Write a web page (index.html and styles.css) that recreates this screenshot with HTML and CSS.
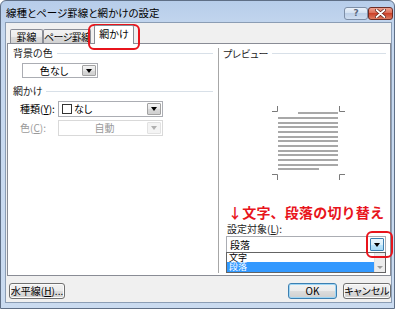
FILE: index.html
```html
<!DOCTYPE html>
<html lang="ja">

<head>
    <meta charset="UTF-8">
    <meta name="viewport" content="width=device-width, initial-scale=1.0">
    <title>線種とページ罫線と網かけの設定</title>
    <link rel="stylesheet" href="styles.css">
</head>

<body>
    <div class="window">
        <div class="titlebar">
            <span class="title">線種とページ罫線と網かけの設定</span>
            <div class="caption-buttons">
                <button class="cap help">?</button>
                <button class="cap close">
                    <svg width="11" height="9" viewBox="0 0 11 9">
                        <path d="M1.5 1 L9.5 8 M9.5 1 L1.5 8" stroke="#5a1c14" stroke-width="3.2" stroke-linecap="round" />
                        <path d="M1.5 1 L9.5 8 M9.5 1 L1.5 8" stroke="#fff" stroke-width="1.8" stroke-linecap="round" />
                    </svg>
                </button>
            </div>
        </div>

        <div class="client">
            <div class="tabs">
                <div class="tab tab-border">罫線</div>
                <div class="tab tab-page">ページ罫線</div>
                <div class="tab active">網かけ</div>
            </div>

            <div class="panel">
                <!-- left: shading options -->
                <div class="col-left">
                    <div class="group-title">背景の色</div>
                    <div class="combo combo-fill">
                        <span class="combo-text center">色なし</span>
                        <span class="combo-btn"></span>
                    </div>

                    <div class="group-title gap">網かけ</div>
                    <div class="field">
                        <span class="field-label">種類(<u>Y</u>):</span>
                        <div class="combo wide">
                            <span class="swatch"></span>
                            <span class="combo-text">なし</span>
                            <span class="combo-btn"></span>
                        </div>
                    </div>
                    <div class="field disabled">
                        <span class="field-label">色(<u>C</u>):</span>
                        <div class="combo wide">
                            <span class="combo-text center">自動</span>
                            <span class="combo-btn"></span>
                        </div>
                    </div>
                </div>

                <!-- right: preview -->
                <div class="col-right">
                    <div class="group-title">プレビュー</div>
                    <svg class="preview" width="171" height="84" viewBox="0 0 171 84">
                        <g fill="none" stroke="#7a7a7a" stroke-width="1">
                            <path d="M53 11.5 H58.5 V6" />
                            <path d="M120.5 6 V11.5 H126" />
                            <path d="M53 74.5 H58.5 V80" />
                            <path d="M126 74.5 H120.5 V80" />
                        </g>
                        <g fill="#a8a8a8">
                            <rect x="79" y="12" width="40" height="2" />
                            <rect x="59" y="17" width="60" height="2" />
                            <rect x="59" y="22" width="60" height="2" />
                            <rect x="59" y="26" width="60" height="2" />
                            <rect x="59" y="31" width="60" height="2" />
                            <rect x="59" y="36" width="60" height="2" />
                            <rect x="59" y="40" width="60" height="2" />
                            <rect x="59" y="45" width="60" height="2" />
                            <rect x="59" y="50" width="60" height="2" />
                            <rect x="59" y="54" width="60" height="2" />
                            <rect x="59" y="59" width="60" height="2" />
                            <rect x="59" y="64" width="60" height="2" />
                            <rect x="59" y="68" width="41" height="2" />
                        </g>
                    </svg>

                    <div class="note">↓文字、段落の切り替え</div>
                    <div class="apply-label">設定対象(<u>L</u>):</div>
                    <div class="combo apply">
                        <span class="combo-text">段落</span>
                        <span class="combo-btn hot"></span>
                    </div>
                    <div class="droplist">
                        <div class="items">
                            <div class="item">文字</div>
                            <div class="item selected">段落</div>
                        </div>
                        <div class="scroll"><span class="scroll-arrow"></span></div>
                    </div>
                </div>
            </div>

            <div class="footer">
                <button class="btn btn-hline">水平線(<u>H</u>)...</button>
                <div class="footer-right">
                    <button class="btn btn-ok">OK</button>
                    <button class="btn btn-cancel">キャンセル</button>
                </div>
            </div>
        </div>

        <!-- red annotation marks -->
        <div class="mark mark-tab"></div>
        <div class="mark mark-combo"></div>
    </div>
</body>

</html>
```

FILE: styles.css
```css
* {
    margin: 0;
    padding: 0;
    box-sizing: border-box;
}

body {
    width: 400px;
    height: 309px;
    overflow: hidden;
    background: #fff;
    font-family: "Noto Sans CJK JP", "Noto Sans", sans-serif;
    font-size: 10px;
    color: #000;
    font-feature-settings: "palt";
}

u {
    text-decoration: underline;
    text-underline-offset: 1px;
}

/* window frame */
.window {
    position: relative;
    width: 395px;
    height: 309px;
    border: 1px solid #5f6f86;
    border-radius: 6px 6px 0 0;
    background: linear-gradient(#b7cdea, #c6d8ef 30px, #cadbf0);
    padding: 0 2px 5px 4px;
    display: flex;
    flex-direction: column;
}

.titlebar {
    height: 21px;
    display: flex;
    justify-content: space-between;
    align-items: flex-start;
    padding: 5px 1px 0 1px;
    margin-right: -2px;
}

.title {
    font-size: 10.5px;
    line-height: 14px;
    color: #000;
}

.caption-buttons {
    display: flex;
    margin-top: 1px;
}

.cap {
    height: 13px;
    border-radius: 3px;
    display: flex;
    align-items: center;
    justify-content: center;
    font-family: "DejaVu Sans", sans-serif;
}

.help {
    width: 24px;
    border: 1px solid #7d8ea6;
    background: linear-gradient(#eaf1fa, #d4e2f2 45%, #bccfe7 50%, #cfdef1);
    color: #5b6a80;
    font-size: 9px;
    font-weight: bold;
    line-height: 11px;
}

.close {
    width: 25px;
    border: 1px solid #6d2c25;
    background: linear-gradient(#eea392, #dc6b55 45%, #cc4129 50%, #de7c62);
}

/* client area */
.client {
    flex: 1;
    background: #f0f0f0;
    border: 1px solid #8b9db4;
    padding: 2px 0 0 1px;
    display: flex;
    flex-direction: column;
}

.tabs {
    height: 19px;
    margin-bottom: -1px;
    padding-left: 3px;
    display: flex;
    align-items: flex-end;
}

.tab {
    height: 15px;
    border: 1px solid #898c95;
    border-bottom: none;
    border-radius: 2px 2px 0 0;
    background: linear-gradient(#f3f3f3, #ebebeb 50%, #dddddd 50%, #cfcfcf);
    text-align: center;
    line-height: 13px;
    white-space: nowrap;
    overflow: hidden;
}

.tab-border {
    width: 33px;
}

.tab-page {
    width: 48px;
    letter-spacing: -0.6px;
}

.tab.active {
    position: relative;
    z-index: 2;
    width: 40px;
    height: 19px;
    margin-left: 3px;
    background: #fff;
    line-height: 16px;
}

.panel {
    height: 233px;
    border: 1px solid #898c95;
    background: #fff;
    display: flex;
}

.col-left {
    width: 210px;
    padding-top: 3px;
}

.col-right {
    flex: 1;
    margin: 4px 0 2px;
    border-left: 1px solid #a7a7a7;
    display: flex;
    flex-direction: column;
}

.group-title {
    display: flex;
    align-items: center;
    height: 12px;
    line-height: 12px;
    padding: 0 5px;
    color: #1e1e1e;
}

.group-title::after {
    content: "";
    flex: 1;
    border-top: 1px solid #d8e0e8;
    margin-left: 4px;
}

.group-title.gap {
    margin-top: 7px;
}

.col-right .group-title {
    height: 11px;
    padding: 0 4px;
}

/* combo boxes */
.combo {
    display: flex;
    align-items: center;
    height: 16px;
    border: 1px solid #abadb3;
    background: #fff;
    padding: 1px;
}

.combo-fill {
    width: 76px;
    height: 15px;
    margin: 4px 0 0 14px;
}

.combo-text {
    flex: 1;
    line-height: 12px;
    padding-left: 2px;
}

.combo-text.center {
    text-align: center;
}

.combo-btn {
    position: relative;
    width: 14px;
    height: 100%;
    border: 1px solid #a2a2a2;
    border-radius: 1px;
    background: linear-gradient(#f4f4f4, #e6e6e6 50%, #d9d9d9 50%, #d0d0d0);
}

.combo-btn::after {
    content: "";
    position: absolute;
    left: 50%;
    top: 50%;
    margin: -2px 0 0 -3px;
    border-left: 3px solid transparent;
    border-right: 3px solid transparent;
    border-top: 4px solid #000;
}

.combo-btn.hot {
    border-color: #3c7fb1;
    background: linear-gradient(#eaf6fd, #d9f0fc 50%, #bee6fd 50%, #a7d9f5);
}

.field {
    display: flex;
    align-items: center;
    padding-left: 12px;
    margin-top: 4px;
}

.field + .field {
    margin-top: 3px;
}

.field-label {
    width: 38px;
    line-height: 12px;
}

.combo.wide {
    width: 105px;
}

.swatch {
    width: 10px;
    height: 10px;
    margin-left: 2px;
    border: 1px solid #333;
    background: #fff;
}

.field.disabled .field-label,
.field.disabled .combo-text {
    color: #9a9a9a;
}

.field.disabled .combo {
    border-color: #d9d9d9;
}

.field.disabled .combo-btn {
    border-color: #e2e2e2;
    background: #f4f4f4;
}

.field.disabled .combo-btn::after {
    border-top-color: #b0b0b0;
}

/* preview side */
.preview {
    display: block;
    margin-top: 41px;
}

.note {
    margin-top: 20px;
    padding-left: 9px;
    font-size: 14px;
    line-height: 16px;
    font-weight: bold;
    color: #e8141c;
    letter-spacing: 0.2px;
    font-feature-settings: normal;
    white-space: nowrap;
}

.apply-label {
    margin-top: 3px;
    padding-left: 8px;
    line-height: 12px;
    color: #222;
}

.combo.apply {
    width: 160px;
    height: 17px;
    margin: 1px 0 0 7px;
}

.droplist {
    width: 160px;
    height: 21px;
    margin: -1px 0 0 7px;
    border: 1px solid #646464;
    background: #fff;
    display: flex;
}

.items {
    flex: 1;
}

.item {
    height: 9px;
    font-size: 9px;
    line-height: 9px;
    padding-left: 2px;
}

.item.selected {
    height: 10px;
    line-height: 10px;
    background: #3399ff;
    color: #fff;
}

.scroll {
    position: relative;
    width: 11px;
    background: #ececec;
    border-left: 1px solid #e0e0e0;
}

.scroll-arrow {
    position: absolute;
    left: 2px;
    bottom: 3px;
    border-left: 3px solid transparent;
    border-right: 3px solid transparent;
    border-top: 3px solid #9a9a9a;
}

/* bottom buttons */
.footer {
    flex: 1;
    display: flex;
    justify-content: space-between;
    align-items: flex-start;
    padding: 7px 0 0 2px;
}

.footer-right {
    display: flex;
    gap: 6px;
}

.btn {
    height: 16px;
    border: 1px solid #707070;
    border-radius: 3px;
    background: linear-gradient(#f2f2f2, #ebebeb 50%, #dddddd 50%, #cfcfcf);
    box-shadow: inset 0 0 0 1px #fbfbfb;
    font-family: inherit;
    font-size: 10px;
    line-height: 12px;
    color: #000;
    font-feature-settings: "palt";
    white-space: nowrap;
}

.btn-hline {
    width: 56px;
}

.btn-ok {
    width: 49px;
    border-color: #3c7fb1;
    box-shadow: inset 0 0 0 1px #9fd6f5;
}

.btn-cancel {
    width: 48px;
}

/* red annotations */
.mark {
    position: absolute;
    border: 2px solid #e8141c;
    border-radius: 6px;
}

.mark-tab {
    left: 87px;
    top: 23px;
    width: 52px;
    height: 26px;
}

.mark-combo {
    left: 365px;
    top: 230px;
    width: 27px;
    height: 27px;
}
```
